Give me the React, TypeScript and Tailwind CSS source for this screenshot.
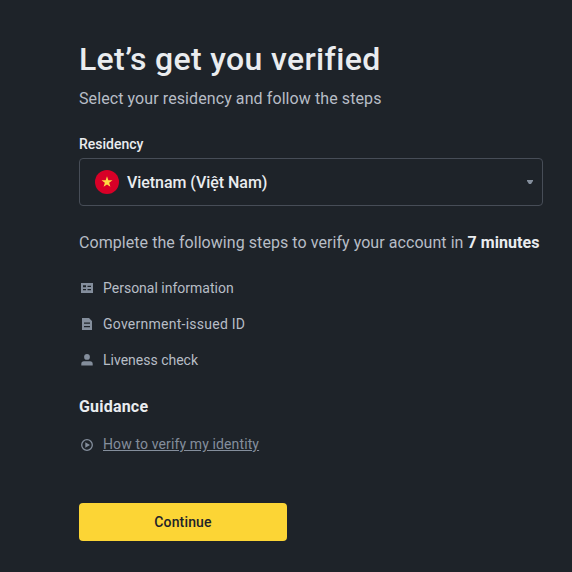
import type { ReactNode } from 'react';

function IdCardIcon() {
  return (
    <svg width="16" height="16" viewBox="0 0 16 16" fill="currentColor" className="shrink-0">
      <path
        fillRule="evenodd"
        d="M2 3h12v10H2V3zm2 2.200v2h3v-2H4zm4.500 .6V7H12V5.800H8.500zM4 9v1.200h3V9H4zm4.500 0v1.200H12V9H8.500z"
      />
    </svg>
  );
}

function DocumentIcon() {
  return (
    <svg width="16" height="16" viewBox="0 0 16 16" fill="currentColor" className="shrink-0">
      <path
        fillRule="evenodd"
        d="M3 2h7l3 3v9H3V2zm2 4.500v1.200h6V6.500H5zm0 3.500v1.200h6V10H5z"
      />
    </svg>
  );
}

function PersonIcon() {
  return (
    <svg width="16" height="16" viewBox="0 0 16 16" fill="currentColor" className="shrink-0">
      <circle cx="8" cy="4.900" r="2.900" />
      <path d="M2.300 13.500V12A2.700 2.700 0 0 1 5 9.300h6a2.700 2.700 0 0 1 2.700 2.700v1.500H2.300z" />
    </svg>
  );
}

function PlayIcon() {
  return (
    <svg width="16" height="16" viewBox="0 0 16 16" className="mt-0.5 shrink-0">
      <circle cx="8" cy="8" r="5.300" fill="none" stroke="currentColor" strokeWidth="1.300" />
      <path d="M6.300 5.300v5.400L11 8z" fill="currentColor" />
    </svg>
  );
}

function Step({ icon, children }: { icon: ReactNode; children: ReactNode }) {
  return (
    <li className="flex h-5 items-center gap-2 text-[#848e9c]">
      {icon}
      <span className="text-sm text-[#b7bdc6]">{children}</span>
    </li>
  );
}

export default function App() {
  return (
    <div className="min-h-screen bg-[#1e2329] pt-[39px] pr-[29px] pl-[79px] font-['Roboto','Liberation_Sans',sans-serif] whitespace-nowrap text-[#eaecef]">
      <h1 className="text-[32px] leading-10 font-medium tracking-[0.33px]">
        Let’s get you verified
      </h1>
      <p className="mt-2 text-base leading-6 tracking-[0.09px] text-[#b7bdc6]">
        Select your residency and follow the steps
      </p>

      {/* Residency select */}
      <div className="mt-[23px]">
        <div className="text-sm leading-5 font-medium">Residency</div>
        <button className="mt-1 flex h-12 w-full items-center rounded border border-[#474d57] pr-2 pl-[15px]">
          <svg width="24" height="24" viewBox="0 0 24 24" className="shrink-0">
            <circle cx="12" cy="12" r="12" fill="#d80027" />
            <path
              d="M12 6.300l1.350 4h4.150l-3.350 2.500 1.250 4L12 14.400l-3.400 2.400 1.250-4-3.350-2.500h4.150z"
              fill="#ffda44"
            />
          </svg>
          <span className="ml-2 pt-0.5 text-base font-medium tracking-[-0.05px]">
            Vietnam (Việt Nam)
          </span>
          <svg width="8" height="6" viewBox="0 0 8 6" className="ml-auto" fill="#848e9c">
            <path d="M1 1h6v1L5 5H3L1 2z" />
          </svg>
        </button>
      </div>

      <p className="mt-[25px] text-base leading-6 tracking-[0.06px] text-[#b7bdc6]">
        Complete the following steps to verify your account in{' '}
        <span className="font-bold text-[#eaecef]">7 minutes</span>
      </p>

      <ul className="mt-[23px] space-y-4">
        <Step icon={<IdCardIcon />}>Personal information</Step>
        <Step icon={<DocumentIcon />}>
          <span className="tracking-[0.25px]">Government-issued ID</span>
        </Step>
        <Step icon={<PersonIcon />}>Liveness check</Step>
      </ul>

      {/* Guidance */}
      <h2 className="mt-[25px] text-base leading-6 font-bold tracking-[0.2px]">Guidance</h2>
      <a href="#" className="mt-[15px] flex h-5 items-center gap-2 text-[#848e9c]">
        <PlayIcon />
        <span className="text-sm tracking-[0.12px] underline">How to verify my identity</span>
      </a>

      <button className="mt-[49px] h-[38px] w-[208px] rounded bg-[#fcd535] text-sm font-medium tracking-[0.15px] text-[#1e2329]">
        Continue
      </button>
    </div>
  );
}
